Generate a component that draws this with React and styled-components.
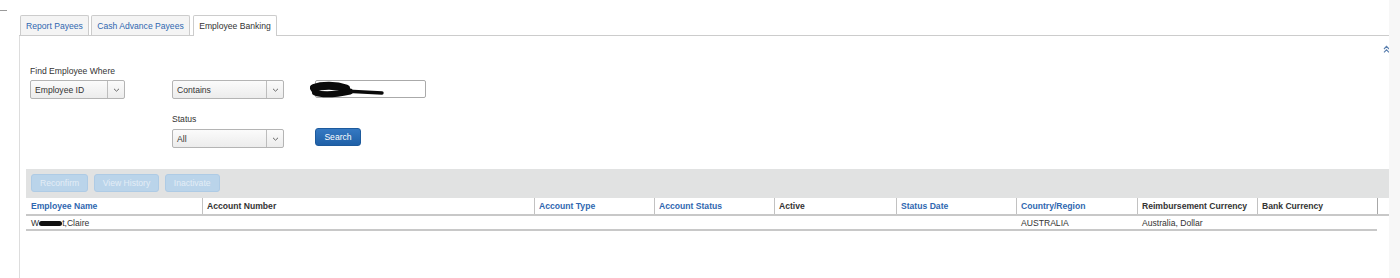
import React from "react";
import styled, { createGlobalStyle } from "styled-components";

const GlobalStyle = createGlobalStyle`
  html, body {
    margin: 0;
    padding: 0;
    background: #ffffff;
  }
  body {
    font-family: "Liberation Sans", Arial, sans-serif;
    font-size: 8.6px;
    color: #333333;
  }
`;

const Page = styled.div`
  display: flex;
  height: 100vh;
  overflow: hidden;
`;

const Main = styled.div`
  flex: 1;
  display: flex;
  flex-direction: column;
`;

const Strip = styled.div`
  flex: 0 0 11px;
  background: #f7f7f7;
`;

const TopBar = styled.div`
  flex: 0 0 15px;
  span {
    display: block;
    width: 7px;
    margin-top: 10px;
    border-top: 1px solid #9a9a9a;
  }
`;

const Panel = styled.div`
  flex: 1;
  margin-left: 19px;
  display: flex;
  flex-direction: column;
`;

const TabBar = styled.div`
  display: flex;
  align-items: flex-end;
  gap: 2px;
  height: 20px;
  padding-left: 1px;
  border-bottom: 1px solid #cccccc;
`;

const Tab = styled.div`
  box-sizing: border-box;
  width: ${(p) => p.width}px;
  height: ${(p) => (p.active ? "21px" : "20px")};
  margin-bottom: ${(p) => (p.active ? "-1px" : "0")};
  margin-left: ${(p) => (p.active ? "1px" : "0")};
  display: flex;
  align-items: center;
  justify-content: center;
  padding-bottom: ${(p) => (p.active ? "1px" : "0")};
  border: 1px solid #cccccc;
  border-bottom: none;
  border-radius: 2px 2px 0 0;
  background: ${(p) => (p.active ? "#ffffff" : "#f4f4f4")};
  color: ${(p) => (p.active ? "#333333" : "#2f67b0")};
  white-space: nowrap;
  cursor: pointer;
`;

const Body = styled.div`
  flex: 1;
  border-left: 1px solid #dddddd;
  background: #ffffff;
`;

const CollapseRow = styled.div`
  height: 20px;
  display: flex;
  justify-content: flex-end;
  svg {
    margin-top: 9px;
    margin-right: -1px;
  }
`;

const Form = styled.div`
  display: grid;
  grid-template-columns: 142px 143px 1fr;
  padding: 10px 0 0 10px;
`;

const Label = styled.div`
  line-height: 11px;
  margin-top: ${(p) => p.top || "0"};
  margin-bottom: ${(p) => p.bottom || "3px"};
  color: #333333;
`;

const SelectBox = styled.div`
  box-sizing: border-box;
  width: ${(p) => p.width}px;
  height: 19px;
  display: flex;
  border: 1px solid #b4b4b4;
  border-radius: 2px;
  background: linear-gradient(#fbfbfb, #ececec);
`;

const SelectValue = styled.div`
  flex: 1;
  display: flex;
  align-items: center;
  padding-left: 4px;
  color: #333333;
`;

const SelectArrow = styled.div`
  flex: 0 0 16px;
  display: flex;
  align-items: center;
  justify-content: center;
  border-left: 1px solid #bdbdbd;
`;

const InputWrap = styled.div`
  position: relative;
  width: 111px;
  height: 18px;
`;

const TextInput = styled.div`
  box-sizing: border-box;
  width: 100%;
  height: 100%;
  border: 1px solid #aaaaaa;
  border-radius: 2px;
  background: #ffffff;
`;

const Scribble = styled.svg`
  position: absolute;
  left: -5px;
  top: 1px;
`;

const SearchButton = styled.div`
  box-sizing: border-box;
  width: 46px;
  height: 18px;
  margin-top: -1px;
  display: flex;
  align-items: center;
  justify-content: center;
  border: 1px solid #1d5a9c;
  border-radius: 3px;
  background: linear-gradient(#3579c2, #1f60a7);
  color: #ffffff;
  cursor: pointer;
`;

const Toolbar = styled.div`
  margin: 21px 0 0 6px;
  height: 29px;
  box-sizing: border-box;
  padding: 5px 5px;
  display: flex;
  gap: 5.5px;
  background: #e1e2e2;
`;

const ToolButton = styled.div`
  box-sizing: border-box;
  height: 18px;
  padding: 0 8px;
  display: flex;
  align-items: center;
  border: 1px solid #aecbe5;
  border-radius: 3px;
  background: #bad4ea;
  color: #e3edf6;
`;

const HeaderRow = styled.div`
  margin-left: 6px;
  display: flex;
  height: 18px;
  box-sizing: border-box;
  border-bottom: 2px solid #c8c8c8;
`;

const HeadCell = styled.div`
  box-sizing: border-box;
  flex: 0 0 ${(p) => p.width}px;
  display: flex;
  align-items: center;
  padding-left: ${(p) => (p.first ? "5px" : "4px")};
  border-left: ${(p) => (p.first ? "none" : "1px solid #c2c2c2")};
  border-right: ${(p) => (p.last ? "1px solid #a8a8a8" : "none")};
  font-weight: bold;
  color: ${(p) => (p.link ? "#2f67b0" : "#333333")};
  white-space: nowrap;
`;

const HeadFiller = styled.div`
  flex: 1;
`;

const DataRow = styled.div`
  margin-left: 6px;
  width: 1351px;
  display: flex;
  height: 15px;
  box-sizing: border-box;
  border-bottom: 2px solid #c8c8c8;
`;

const DataCell = styled.div`
  box-sizing: border-box;
  flex: 0 0 ${(p) => p.width}px;
  display: flex;
  align-items: center;
  padding-left: 5px;
  color: #333333;
  white-space: nowrap;
`;

const Redacted = styled.span`
  display: inline-block;
  width: 23px;
  height: 5px;
  margin-top: 1px;
  border-radius: 3px;
  background: #111111;
`;

const columns = [
  { label: "Employee Name", width: 176, link: true },
  { label: "Account Number", width: 332 },
  { label: "Account Type", width: 120, link: true },
  { label: "Account Status", width: 120, link: true },
  { label: "Active", width: 122 },
  { label: "Status Date", width: 120, link: true },
  { label: "Country/Region", width: 121, link: true },
  { label: "Reimbursement Currency", width: 120 },
  { label: "Bank Currency", width: 121 },
];

const Chevron = () => (
  <svg width="7" height="4" viewBox="0 0 7 4">
    <path d="M1 0.8 L3.5 3.2 L6 0.8" fill="none" stroke="#666" strokeWidth="1" />
  </svg>
);

const Select = ({ width, value }) => (
  <SelectBox width={width}>
    <SelectValue>{value}</SelectValue>
    <SelectArrow>
      <Chevron />
    </SelectArrow>
  </SelectBox>
);

export default function App() {
  const row = [
    <>
      W<Redacted />t,Claire
    </>,
    "",
    "",
    "",
    "",
    "",
    "AUSTRALIA",
    "Australia, Dollar",
    "",
  ];
  return (
    <>
      <GlobalStyle />
      <Page>
        <Main>
          <TopBar>
            <span />
          </TopBar>
          <Panel>
            <TabBar>
              <Tab width={69}>Report Payees</Tab>
              <Tab width={99}>Cash Advance Payees</Tab>
              <Tab width={84} active>
                Employee Banking
              </Tab>
            </TabBar>
            <Body>
              <CollapseRow>
                <svg width="7" height="8" viewBox="0 0 7 8">
                  <path
                    d="M1 4 L3.5 1.4 L6 4 M1 7.4 L3.5 4.8 L6 7.4"
                    fill="none"
                    stroke="#5a7fae"
                    strokeWidth="1.1"
                  />
                </svg>
              </CollapseRow>
              <Form>
                <Label>Find Employee Where</Label>
                <div />
                <div />
                <Select width={95} value="Employee ID" />
                <Select width={112} value="Contains" />
                <InputWrap>
                  <TextInput />
                  <Scribble width="80" height="18" viewBox="0 0 80 18">
                    <path d="M4 7 C 12 4, 26 4, 36 7.5" fill="none" stroke="#0a0a0a" strokeWidth="8" strokeLinecap="round" />
                    <path d="M5 11.5 C 14 15, 28 13, 40 10.5" fill="none" stroke="#0a0a0a" strokeWidth="6" strokeLinecap="round" />
                    <path d="M34 10 L 72 12" fill="none" stroke="#0a0a0a" strokeWidth="3.4" strokeLinecap="round" />
                  </Scribble>
                </InputWrap>
                <div />
                <Label top="14.5px" bottom="4.5px">
                  Status
                </Label>
                <div />
                <div />
                <Select width={112} value="All" />
                <SearchButton>Search</SearchButton>
              </Form>
              <Toolbar>
                <ToolButton>Reconfirm</ToolButton>
                <ToolButton>View History</ToolButton>
                <ToolButton>Inactivate</ToolButton>
              </Toolbar>
              <HeaderRow>
                {columns.map((c, i) => (
                  <HeadCell
                    key={c.label}
                    width={c.width}
                    link={c.link}
                    first={i === 0}
                    last={i === columns.length - 1}
                  >
                    {c.label}
                  </HeadCell>
                ))}
                <HeadFiller />
              </HeaderRow>
              <DataRow>
                {columns.map((c, i) => (
                  <DataCell key={c.label} width={c.width}>
                    {row[i]}
                  </DataCell>
                ))}
              </DataRow>
            </Body>
          </Panel>
        </Main>
        <Strip />
      </Page>
    </>
  );
}
